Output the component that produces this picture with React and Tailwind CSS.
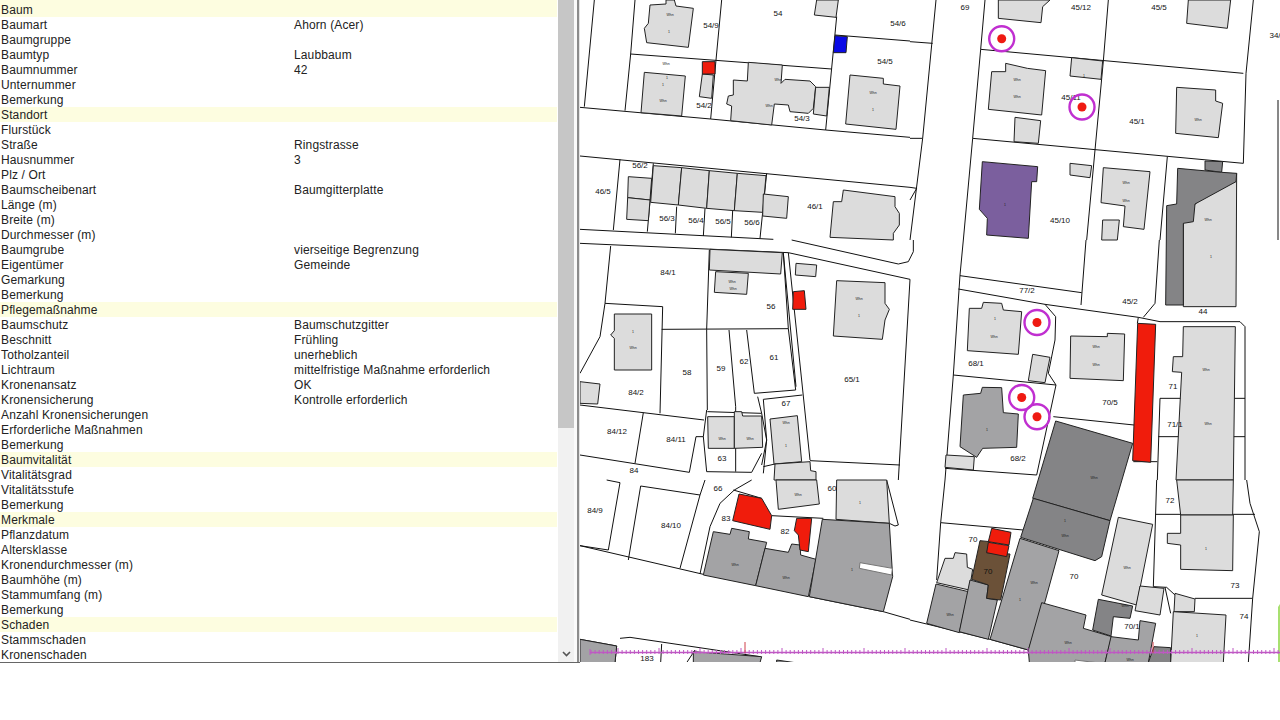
import React from "react";

const rows = [
  ["Baum", "", true], ["Baumart", "Ahorn (Acer)"], ["Baumgruppe", ""], ["Baumtyp", "Laubbaum"],
  ["Baumnummer", "42"], ["Unternummer", ""], ["Bemerkung", ""], ["Standort", "", true],
  ["Flurstück", ""], ["Straße", "Ringstrasse"], ["Hausnummer", "3"], ["Plz / Ort", ""],
  ["Baumscheibenart", "Baumgitterplatte"], ["Länge (m)", ""], ["Breite (m)", ""], ["Durchmesser (m)", ""],
  ["Baumgrube", "vierseitige Begrenzung"], ["Eigentümer", "Gemeinde"], ["Gemarkung", ""], ["Bemerkung", ""],
  ["Pflegemaßnahme", "", true], ["Baumschutz", "Baumschutzgitter"], ["Beschnitt", "Frühling"],
  ["Totholzanteil", "unerheblich"], ["Lichtraum", "mittelfristige Maßnahme erforderlich"], ["Kronenansatz", "OK"],
  ["Kronensicherung", "Kontrolle erforderlich"], ["Anzahl Kronensicherungen", ""], ["Erforderliche Maßnahmen", ""],
  ["Bemerkung", ""], ["Baumvitalität", "", true], ["Vitalitätsgrad", ""], ["Vitalitätsstufe", ""], ["Bemerkung", ""],
  ["Merkmale", "", true], ["Pflanzdatum", ""], ["Altersklasse", ""], ["Kronendurchmesser (m)", ""], ["Baumhöhe (m)", ""],
  ["Stammumfang (m)", ""], ["Bemerkung", ""], ["Schaden", "", true], ["Stammschaden", ""], ["Kronenschaden", ""],
];

const LIGHT = "#dcdcdc";
const MID = "#a3a3a5";
const DARK = "#848486";
const RED = "#f01c0c";

// traced from 3x crops, so every layer keeps its crop origin
const layers = [
  {
    ox: 540, oy: 0,
    lines: [
      "163,0 133,320", "120,322 512,357 857,390 1110,412", "272,162 255,332", "272,162 875,207", "285,0 272,162",
      "545,0 528,180 512,357", "890,50 857,390", "885,105 1110,123", "120,468 1110,562", "120,688 700,718",
      "240,478 220,690", "340,490 322,695", "680,520 660,715", "410,620 406,700", "495,625 490,708", "578,632 574,712",
    ],
    shapes: [
      [LIGHT, "378,0 378,12 330,15 325,70 313,85 320,128 445,142 460,25 408,18 403,0"],
      [LIGHT, "830,0 823,45 888,52 895,0"],
      [LIGHT, "487,222 520,225 515,295 478,290"],
      [RED, "487,185 525,185 525,222 487,222"],
      ["#0a0ae6", "885,107 922,110 918,158 880,158"],
      [LIGHT, "303,338 313,217 436,228 425,348"],
      [LIGHT, "580,240 622,243 625,187 727,195 723,250 735,238 810,243 827,260 820,325 805,340 750,335 745,315 703,312 695,375 572,362 575,318 560,312 565,288 580,285"],
      [LIGHT, "827,262 868,262 860,348 820,342"],
      [LIGHT, "930,225 1030,235 1030,252 1080,258 1068,388 917,372"],
      [LIGHT, "340,497 425,503 415,615 332,607"],
      [LIGHT, "425,503 508,512 500,625 415,615"],
      [LIGHT, "508,512 592,520 583,632 500,625"],
      [LIGHT, "592,520 678,527 668,637 583,632"],
      [LIGHT, "265,530 335,535 330,600 263,593"],
      [LIGHT, "263,593 330,600 325,662 260,658"],
      [LIGHT, "670,582 745,590 740,655 668,648"],
      [LIGHT, "910,570 1065,590 1065,620 1078,640 1078,675 1060,700 1060,720 870,712 880,605 905,605"],
    ],
  },
  {
    ox: 910, oy: 0,
    lines: [
      "78,0 38,415 0,720", "0,125 68,130", "0,415 38,415", "225,0 212,148 188,415 160,720", "595,0 580,183 555,450 530,720",
      "212,148 1000,220", "1030,0 1008,220 1000,490", "188,415 1000,490", "772,470 750,720", "1104,300 1104,720",
      "0,562 20,565 0,600",
    ],
    shapes: [
      [LIGHT, "265,0 420,0 398,20 393,68 265,55"],
      [LIGHT, "835,0 962,0 952,85 830,70"],
      [LIGHT, "287,190 352,205 407,212 395,345 235,328 245,215 287,215"],
      [LIGHT, "485,173 578,183 573,238 480,228"],
      [LIGHT, "315,352 392,362 385,430 312,425"],
      [LIGHT, "800,262 917,270 917,303 938,310 925,413 797,400"],
      [LIGHT, "480,490 545,497 540,533 480,525"],
      ["#7b5f9e", "217,485 383,500 380,545 365,545 355,715 230,705 232,655 208,628"],
      [LIGHT, "580,503 720,515 702,688 640,680 645,618 573,608"],
      [LIGHT, "578,660 628,660 622,720 575,720"],
      [DARK, "885,483 938,485 935,517 885,510"],
      [LIGHT, "980,520 978,920 820,920 820,670 855,612"],
      [DARK, "803,505 935,517 980,520 978,545 855,612 850,665 820,670 820,915 767,915 770,617 800,612"],
    ],
  },
  {
    ox: 570, oy: 240,
    lines: [
      "30,10 655,38 1020,118", "665,0 985,72 1015,65 1030,35 1030,0", "122,18 105,190 90,290 30,400", "105,190 278,200 270,520",
      "418,30 410,268 412,510", "275,268 655,266", "477,270 497,500 497,695", "530,270 553,460 677,450 655,266", "640,38 655,266",
      "655,38 720,660", "30,495 402,540", "220,518 195,670", "30,645 358,697 378,590 400,590", "412,515 575,520 590,600 575,675",
      "563,470 575,520", "580,478 697,465", "580,478 590,600 580,700", "410,510 400,590 410,695 545,697 575,640",
      "1020,118 985,720", "720,662 990,675", "580,680 615,672", "678,440 640,40",
    ],
    shapes: [
      [LIGHT, "420,28 637,38 632,102 418,90"],
      [LIGHT, "437,95 535,100 530,163 433,157"],
      [RED, "670,155 703,152 708,208 668,208"],
      [LIGHT, "678,70 740,75 737,110 676,105"],
      [LIGHT, "800,122 945,128 945,190 958,208 945,240 937,298 790,288"],
      [LIGHT, "133,222 245,222 245,390 133,390 133,295 122,285 133,272"],
      [LIGHT, "30,425 90,432 83,492 30,490"],
      [LIGHT, "413,530 493,530 493,625 415,625"],
      [LIGHT, "493,515 515,515 518,528 575,528 578,622 493,625"],
      [LIGHT, "600,537 682,527 695,665 612,672"],
      [LIGHT, "615,672 720,665 722,692 738,695 738,720 612,720"],
    ],
  },
  {
    ox: 910, oy: 240,
    lines: [
      "160,0 150,105 130,405 105,720", "150,107 515,158", "145,147 405,193 685,232 750,245 990,245 1005,260 1005,720", "528,0 513,195",
      "748,0 735,190 700,232", "405,193 437,230 435,300 415,400 438,435", "130,405 438,435 380,705", "430,530 672,555", "105,685 380,705",
      "750,475 1005,475", "745,590 1005,590", "750,475 742,720", "670,665 742,665", "685,232 682,250",
    ],
    shapes: [
      [LIGHT, "178,205 215,205 220,187 275,190 280,210 335,215 325,343 172,332"],
      [LIGHT, "368,343 420,352 405,428 355,422"],
      [LIGHT, "482,288 592,290 592,280 644,282 640,422 480,415"],
      [RED, "683,250 737,253 722,667 668,662"],
      [LIGHT, "820,260 976,260 970,720 798,720 815,397 787,395 790,350 818,350"],
      [MID, "160,465 212,460 217,442 275,443 280,518 325,522 320,622 218,625 200,652 150,620"],
      [LIGHT, "108,645 193,650 190,690 105,682"],
      [DARK, "437,543 668,610 600,842 368,775"],
    ],
  },
  {
    ox: 540, oy: 480,
    lines: [
      "120,197 205,210 240,8 200,0", "120,197 490,283", "265,240 302,18 480,45 420,265", "480,282 510,140 540,70 583,30 635,0", "495,0 480,45",
      "808,350 1030,395 1110,418", "120,478 230,498", "240,475 270,472 660,530", "230,498 225,548", "365,492 362,548", "440,548 465,510",
      "1040,0 1075,135 1065,138 1048,130", "695,107 850,115", "665,55 580,30",
    ],
    shapes: [
      [LIGHT, "708,0 830,0 838,72 715,88"],
      [LIGHT, "890,0 1040,0 1048,130 888,118"],
      [RED, "597,42 665,55 695,107 690,148 578,122"],
      [MID, "520,155 570,163 575,145 628,155 625,177 680,187 647,317 490,285"],
      [MID, "675,205 745,217 755,192 780,195 782,225 828,238 805,350 647,317"],
      [MID, "847,118 1048,130 1058,290 1030,395 808,350"],
      ["#ffffff", "960,248 1057,265 1055,285 958,265"],
      [RED, "770,115 815,115 805,215 780,210 775,165 763,152"],
      [MID, "120,478 230,498 225,548 120,548"],
      [MID, "460,515 665,530 660,548 460,548"],
      [DARK, "710,540 765,548 710,548"],
    ],
  },
  {
    ox: 910, oy: 480,
    lines: [
      "105,0 92,128 80,300", "92,128 340,150", "0,420 50,432 240,478 355,510", "740,0 730,320 770,322 795,345",
      "737,103 1035,103", "855,355 1028,355", "1010,0 1020,70 1048,155 1028,355 1015,548", "355,510 362,548", "765,322 782,400",
    ],
    shapes: [
      [LIGHT, "105,235 130,235 135,218 170,222 172,262 188,268 178,330 80,308"],
      [MID, "78,312 175,335 148,458 50,430"],
      [MID, "180,300 235,315 230,355 262,360 235,478 148,455"],
      ["#6b5138", "210,182 240,185 230,218 300,222 272,360 230,355 235,315 185,298"],
      [RED, "245,145 303,157 297,195 235,185"],
      [RED, "235,187 297,197 290,230 230,218"],
      [MID, "330,175 447,212 405,365 355,510 240,478"],
      [DARK, "370,55 600,122 575,230 555,242 332,172"],
      [LIGHT, "625,112 728,133 680,375 575,345"],
      [MID, "395,368 528,405 520,445 605,470 585,548 358,548 355,510"],
      [DARK, "565,358 668,378 660,415 610,410 603,468 548,450"],
      [LIGHT, "690,318 762,325 750,405 675,392"],
      [MID, "690,422 737,430 715,548 585,548 603,470 685,480"],
      [DARK, "732,500 782,503 782,548 715,548"],
      [LIGHT, "795,340 855,357 853,395 792,395"],
      [LIGHT, "790,395 948,405 940,548 782,548"],
      [LIGHT, "800,0 970,0 968,105 812,105"],
      [LIGHT, "812,105 970,105 968,272 812,268 812,195 772,190 772,160 812,160"],
      ["#ffffff", "495,540 560,548 495,548"],
    ],
  },
];

const labels = [
  ["54/9", 711, 25], ["54", 778, 13], ["54/6", 898, 23], ["54/5", 885, 61], ["54/2", 704, 105], ["54/3", 802, 118],
  ["46/5", 603, 191], ["56/2", 640, 165], ["56/3", 667, 218], ["56/4", 696, 220], ["56/5", 723, 221], ["56/6", 752, 222],
  ["46/1", 815, 206], ["69", 965, 7], ["45/12", 1081, 7], ["45/5", 1159, 7], ["34/", 1275, 35], ["45/11", 1071, 97],
  ["45/1", 1137, 121], ["45/10", 1060, 220], ["77/2", 1027, 290], ["45/2", 1130, 301], ["44", 1203, 311], ["84/1", 668, 272],
  ["56", 771, 306], ["65/1", 852, 379], ["58", 687, 372], ["59", 721, 368], ["62", 744, 361], ["61", 774, 357], ["84/2", 636, 392],
  ["67", 786, 403], ["84/12", 617, 431], ["84/11", 676, 439], ["63", 722, 458], ["84", 634, 470], ["66", 718, 488], ["60", 832, 488],
  ["84/9", 595, 510], ["84/10", 671, 525], ["83", 726, 518], ["82", 785, 531], ["68/1", 976, 363], ["70/5", 1110, 402], ["71", 1173, 386],
  ["71/1", 1175, 424], ["68/2", 1018, 458], ["72", 1170, 500], ["73", 1235, 585], ["74", 1244, 616], ["70", 973, 539], ["70", 988, 571],
  ["70", 1074, 576], ["70/1", 1132, 626], ["183", 647, 658],
];

// tiny house numbers inside the buildings
const specks = [
  [669, 32], [670, 15], [663, 101], [663, 85], [778, 80], [769, 106], [873, 110], [873, 93], [666, 64], [667, 78],
  [1017, 97], [1017, 80], [1084, 76], [1198, 120], [1208, 220], [1005, 205], [1126, 201], [1126, 183], [1211, 257],
  [732, 282], [733, 289], [859, 316], [859, 299], [633, 348], [633, 332], [722, 439], [750, 439], [786, 446], [786, 423],
  [798, 495], [860, 503], [735, 565], [786, 578], [852, 570], [1094, 478], [1065, 536], [1065, 521], [1127, 568],
  [994, 337], [995, 319], [1096, 365], [1096, 347], [987, 430], [1206, 370], [1208, 424], [1206, 549], [1034, 583], [950, 615],
  [1020, 600], [1068, 643], [1130, 660], [1197, 636], [1125, 606],
];

const circles = [
  [1001.7, 38.7], [1082, 107], [1037, 322.5], [1021.7, 397.5], [1037, 416.7],
];

const ticks = Array.from({ length: 167 }, (_, i) => 618 + i * 4.1);
const toPage = (ox, oy, s) =>
  s.split(" ").map((p) => {
    const [x, y] = p.split(",");
    return `${ox + x / 3},${oy + y / 3}`;
  }).join(" ");

const MapView = () => (
  <svg viewBox="580 0 700 662" className="block h-[662px] w-[700px]" fontFamily="Liberation Sans, sans-serif">
    {layers.map((l, i) => (
      <g key={i} fill="none" stroke="#111" strokeWidth="1">
        {l.lines.map((pts, j) => (
          <polyline key={j} points={toPage(l.ox, l.oy, pts)} />
        ))}
      </g>
    ))}
    {layers.map((l, i) => (
      <g key={i} stroke="#222" strokeWidth="1">
        {l.shapes.map(([fill, pts], j) => (
          <polygon key={j} fill={fill} stroke={fill === "#ffffff" ? "#777" : "#222"} points={toPage(l.ox, l.oy, pts)} />
        ))}
      </g>
    ))}
    <g fontSize="8" fill="#111" textAnchor="middle">
      {labels.map(([t, x, y], i) => (
        <text key={i} x={x} y={y + 3}>{t}</text>
      ))}
    </g>
    <g fontSize="3.5" fill="#222" textAnchor="middle">
      {specks.map(([x, y], i) => (
        <text key={i} x={x} y={y + 1}>{i % 3 === 0 ? "1" : "Whn"}</text>
      ))}
    </g>
    {circles.map(([x, y], i) => (
      <g key={i}>
        <circle cx={x} cy={y} r="12.5" fill="none" stroke="#c02fd0" strokeWidth="2.4" />
        <circle cx={x} cy={y} r="4.5" fill="#ef1a12" />
      </g>
    ))}
    <polygon points="1278,607 1280,604 1280,662 1278,662" fill="#a8e070" />
    <g stroke="#bf58c4" strokeWidth="1">
      <line x1="590" y1="652.5" x2="1280" y2="652.5" strokeWidth="1.4" />
      <line x1="590" y1="649" x2="590" y2="655" />
      {ticks.map((x, i) => (
        <line key={i} x1={x} y1={i % 10 === 0 ? 648 : 650} x2={x} y2="654" />
      ))}
      {Array.from({ length: 7 }, (_, i) => (
        <line key={i} x1={591 + i * 4.1} y1="650" x2={591 + i * 4.1} y2="654" />
      ))}
    </g>
    <line x1="745" y1="642" x2="745" y2="653" stroke="#d0404a" strokeWidth="1" />
    <line x1="1153" y1="642" x2="1153" y2="653" stroke="#d0404a" strokeWidth="1" />
  </svg>
);

const App = () => {
  return (
    <div className="flex h-[720px] w-[1280px] items-start overflow-hidden bg-white font-['Liberation_Sans',sans-serif]">
      <div className="flex h-[663px] w-[580px] shrink-0 border-b border-[#666]">
        <div className="flex h-full w-[558px] flex-col overflow-hidden pr-[1px]">
          {rows.map(([name, value, head], i) => (
            <div
              key={i}
              className={`flex shrink-0 pl-[1px] text-[12px] tracking-[0.13px] text-[#222] ${i === 0 ? "h-[17px] items-end" : "h-[15px] items-center"} ${head ? "bg-[#fdfde0]" : ""}`}
            >
              <span className="w-[293px] shrink-0 translate-y-[1px] leading-[15px]">{name}</span>
              <span className="translate-y-[1px] leading-[15px]">{value}</span>
            </div>
          ))}
        </div>
        <div className="flex h-full w-[16px] flex-col bg-[#f1f1f1]">
          <div className="h-[428px] bg-[#c6c6c6]" />
          <div className="flex-1" />
          <div className="flex h-[16px] items-center justify-center">
            <svg width="9" height="6" viewBox="0 0 9 6" fill="none" stroke="#555" strokeWidth="1.6">
              <path d="M1 1l3.5 3.5L8 1" />
            </svg>
          </div>
        </div>
        <div className="w-[3px] bg-[#fafafa]" />
        <div className="w-[2px] bg-[#8c8c8c]" />
        <div className="w-[1px] bg-[#e4e4e4]" />
      </div>
      <MapView />
    </div>
  );
};

export default App;
